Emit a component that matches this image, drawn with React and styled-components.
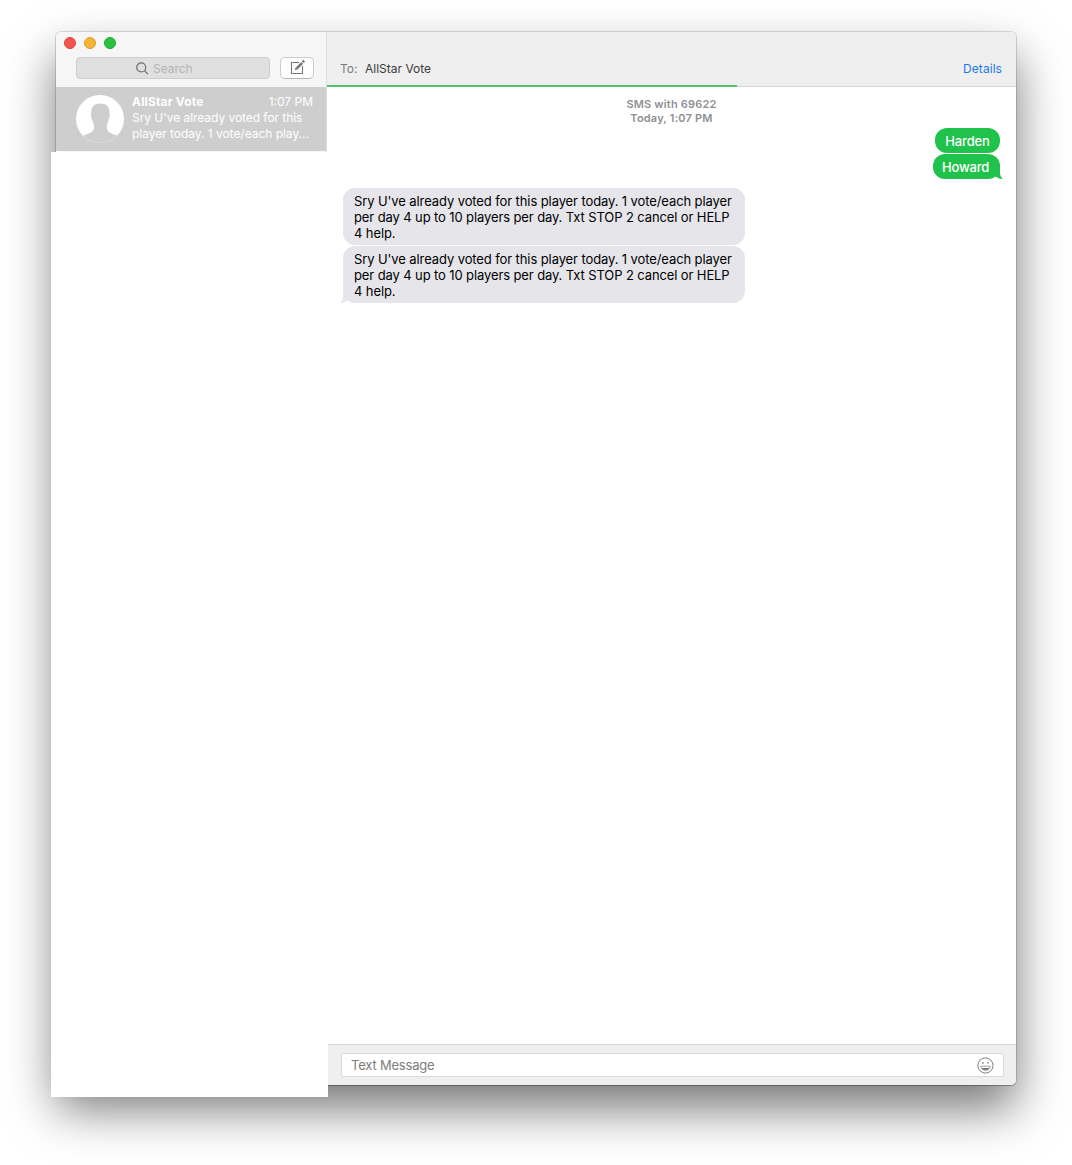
import React from "react";
import styled, { createGlobalStyle } from "styled-components";

const Global = createGlobalStyle`
  * { box-sizing: border-box; }
  body {
    margin: 0;
    background: #fff;
    font-family: Inter, "Liberation Sans", sans-serif;
    font-size: 13px;
    line-height: 16px;
  }
`;

const Desktop = styled.main`
  height: 1165px;
  padding: 32px 56px 80px;
  overflow: hidden;
`;

const Window = styled.div`
  position: relative;
  display: flex;
  width: 960px;
  height: 1053px;
  border-radius: 5px;
  background: #fff;
  box-shadow: 0 0 0 1px rgba(0, 0, 0, 0.13), 0 1px 1px rgba(0, 0, 0, 0.2),
    0 24px 48px rgba(0, 0, 0, 0.53);
`;

const Sidebar = styled.aside`
  width: 271px;
  flex: none;
  border-right: 1px solid #dcdcdc;
  border-radius: 5px 0 0 5px;
  background: #f6f6f6;
  height: 120px;
`;

const SidebarHeader = styled.header`
  height: 55px;
  padding: 5px 8px 0;
`;

const Lights = styled.div`
  display: flex;
  gap: 8px;
`;

const Light = styled.span`
  width: 12px;
  height: 12px;
  border-radius: 50%;
  border: 1px solid ${(p) => p.$edge};
  background: ${(p) => p.$fill};
`;

const Tools = styled.div`
  display: flex;
  gap: 10px;
  padding: 8px 4px 0 12px;
`;

const Search = styled.div`
  display: flex;
  align-items: center;
  gap: 4px;
  width: 194px;
  height: 22px;
  padding: 1px 0 0 59px;
  border: 1px solid #cdcdcd;
  border-radius: 4px;
  background: #e0e0e0;
  color: #b4b4b4;
`;

const SearchLabel = styled.span`
  font-size: 12px;
  letter-spacing: -0.05px;
`;

const Compose = styled.button`
  width: 34px;
  height: 22px;
  padding: 0;
  display: flex;
  justify-content: center;
  border: 1px solid #cbcbcb;
  border-bottom-color: #b5b5b5;
  border-radius: 5px;
  background: #fff;
`;

const Conversation = styled.div`
  display: flex;
  gap: 8px;
  height: 64px;
  padding: 8px 13px 0 20px;
  background: #cecece;
  color: #fff;
`;

const Summary = styled.div`
  flex: 1;
  display: flex;
  flex-direction: column;
  margin-top: -1px;
`;

const SummaryTop = styled.div`
  display: flex;
  justify-content: space-between;
`;

const Name = styled.strong`
  font-size: 12px;
  font-weight: 700;
  letter-spacing: 0.17px;
`;

const Preview = styled.span`
  font-size: 12px;
  white-space: nowrap;
  letter-spacing: ${(p) => p.$track || 0}px;
`;

const BlankPane = styled.div`
  position: absolute;
  left: -5px;
  top: 120px;
  width: 277px;
  height: 945px;
  background: #fff;
`;

const Chat = styled.section`
  flex: 1;
  display: flex;
  flex-direction: column;
`;

const ChatHeader = styled.header`
  height: 55px;
  flex: none;
  display: flex;
  align-items: flex-start;
  padding: 29px 14px 0 13px;
  border-radius: 0 5px 0 0;
  background: #efefef;
  font-size: 12px;
`;

const ToLabel = styled.span`
  width: 25px;
  color: #7b7b7b;
`;

const Recipient = styled.span`
  flex: 1;
  color: #3c3c3c;
`;

const Details = styled.a`
  color: #1f78ea;
  letter-spacing: 0.05px;
`;

const Progress = styled.div`
  height: 2px;
  flex: none;
  margin-top: -2px;
  width: 410px;
  background: #4dc669;
`;

const HeaderRule = styled.div`
  flex: none;
  height: 1px;
  margin-top: -1px;
  margin-left: 410px;
  background: #d4d4d4;
`;

const Transcript = styled.div`
  flex: 1;
  display: flex;
  flex-direction: column;
  padding: 10px 16px 0;
`;

const Stamp = styled.div`
  text-align: center;
  font-size: 11px;
  line-height: 14px;
  font-weight: 600;
  color: #8f9094;
  letter-spacing: 0.19px;
  margin-bottom: 3px;
`;

const Group = styled.div`
  display: flex;
  flex-direction: column;
  gap: 1px;
  align-items: ${(p) => (p.$sent ? "flex-end" : "flex-start")};
  margin-bottom: 9px;
`;

const Bubble = styled.div`
  position: relative;
  width: ${(p) => p.$w}px;
  padding: ${(p) => (p.$sent ? "5px 9px 4px" : "5px 11px 4px")};
  border-radius: 12px;
  background: ${(p) => (p.$sent ? "#1fc24b" : "#e5e5ea")};
  color: ${(p) => (p.$sent ? "#fff" : "#000")};
  font-weight: ${(p) => (p.$sent ? 500 : 400)};
`;

const Line = styled.div`
  white-space: nowrap;
  letter-spacing: ${(p) => p.$track || 0}px;
`;

const SentLine = styled(Line)`
  text-align: center;
`;

const Tail = styled.svg`
  position: absolute;
  bottom: 0;
  ${(p) => (p.$sent ? "right: -3px;" : "left: -3px; transform: scaleX(-1);")}
`;

const Footer = styled.footer`
  height: 41px;
  flex: none;
  padding: 8px 12px 0 14px;
  border-top: 1px solid #d3d3d3;
  border-radius: 0 0 5px 0;
  background: #efefef;
`;

const Input = styled.div`
  display: flex;
  align-items: center;
  justify-content: space-between;
  height: 24px;
  padding: 0 9px;
  border: 1px solid #dadada;
  border-radius: 2px;
  background: #fff;
  color: #7d7d7d;
  letter-spacing: -0.2px;
`;

function BubbleTail({ sent }) {
  return (
    <Tail $sent={sent} width="14" height="12" viewBox="0 0 14 12">
      <path
        d="M11 0V6C11 8.5 12 10.6 14 11.8C12 12.1 9.5 11.5 7.5 10L3 8L3 0Z"
        fill={sent ? "#1fc24b" : "#e5e5ea"}
      />
    </Tail>
  );
}

function Avatar() {
  return (
    <svg width="48" height="48" viewBox="0 0 48 48">
      <circle cx="24" cy="24" r="24" fill="#fff" />
      <path
        d="M24.3 8.4C30.5 8.4 33.6 11.5 33.4 17.5C34 19.5 33.6 22.5 32.8 23.8C32.2 27.5 30.8 29 30.8 31.5C30.8 37.5 34 37.8 41.2 40.8A24 24 0 0 1 7 40.8C14 37.8 18.2 37.5 18.2 31.5C18.2 29 16.6 27.5 15.9 23.8C15 22.5 14.7 19.5 15.3 17.5C15.1 11.5 18.2 8.4 24.3 8.4Z"
        fill="#cecece"
      />
      <path d="M8 41.8A24 24 0 0 0 40 41.8" fill="none" stroke="#dadada" strokeWidth=".6" strokeDasharray="4 2" />
    </svg>
  );
}

const received = [
  ["Sry U've already voted for this player today. 1 vote/each player", -0.1],
  ["per day 4 up to 10 players per day. Txt STOP 2 cancel or HELP", -0.11],
  ["4 help.", -0.1],
];

function Reply({ tail }) {
  return (
    <Bubble $w={402}>
      {tail && <BubbleTail />}
      {received.map(([text, track]) => (
        <Line key={text} $track={track}>{text}</Line>
      ))}
    </Bubble>
  );
}

export default function App() {
  return (
    <Desktop>
      <Global />
      <Window>
        <Sidebar>
          <SidebarHeader>
            <Lights>
              <Light $fill="#f4544f" $edge="#dc443f" />
              <Light $fill="#f6b435" $edge="#dc9c2d" />
              <Light $fill="#29c23f" $edge="#20a935" />
            </Lights>
            <Tools>
              <Search>
                <svg width="13" height="13" viewBox="0 0 13 13" fill="none" stroke="#6e6e6e" strokeWidth="1.2">
                  <circle cx="5.2" cy="5.4" r="4.5" />
                  <path d="M8.5 8.7L11.8 12" />
                </svg>
                <SearchLabel>Search</SearchLabel>
              </Search>
              <Compose aria-label="Compose">
                <svg width="16" height="17" viewBox="0 0 16 17" fill="none" stroke="#777">
                  <path d="M10 4.5H2.5V15.5H13.5V8" strokeWidth="1.1" />
                  <path d="M7.6 10.6L13.2 4.8" strokeWidth="2.6" />
                  <path d="M13.7 4.2L15.2 2.7" strokeWidth="2.6" />
                  <path d="M5.8 12.3L6.5 9.7L8.5 11.6Z" fill="#777" stroke="none" />
                </svg>
              </Compose>
            </Tools>
          </SidebarHeader>
          <Conversation>
            <Avatar />
            <Summary>
              <SummaryTop>
                <Name>AllStar Vote</Name>
                <Preview>1:07 PM</Preview>
              </SummaryTop>
              <Preview $track={-0.05}>Sry U've already voted for this</Preview>
              <Preview $track={-0.03}>player today. 1 vote/each play...</Preview>
            </Summary>
          </Conversation>
        </Sidebar>
        <Chat>
          <ChatHeader>
            <ToLabel>To:</ToLabel>
            <Recipient>AllStar Vote</Recipient>
            <Details>Details</Details>
          </ChatHeader>
          <Progress />
          <HeaderRule />
          <Transcript>
            <Stamp>
              <div>SMS with 69622</div>
              <div>Today, 1:07 PM</div>
            </Stamp>
            <Group $sent>
              <Bubble $sent $w={65}><SentLine $track={-0.15}>Harden</SentLine></Bubble>
              <Bubble $sent $w={67}>
                <BubbleTail sent />
                <Line $track={-0.2}>Howard</Line>
              </Bubble>
            </Group>
            <Group>
              <Reply />
              <Reply tail />
            </Group>
          </Transcript>
          <Footer>
            <Input>
              <span>Text Message</span>
              <svg width="17" height="17" viewBox="0 0 17 17" fill="none" stroke="#7a7a7a">
                <circle cx="8.5" cy="8.5" r="7.6" />
                <circle cx="6" cy="5.9" r=".8" fill="#7a7a7a" stroke="none" />
                <circle cx="11" cy="5.9" r=".8" fill="#7a7a7a" stroke="none" />
                <path d="M3.8 9.2H13.2C13 11.8 11 13.2 8.5 13.2S4 11.8 3.8 9.2Z" strokeWidth=".7" />
                <path d="M4.6 11.1H12.4C11.6 12.7 10.3 13.3 8.5 13.3S5.4 12.7 4.6 11.1Z" fill="#7a7a7a" stroke="none" />
              </svg>
            </Input>
          </Footer>
        </Chat>
        <BlankPane />
      </Window>
    </Desktop>
  );
}
